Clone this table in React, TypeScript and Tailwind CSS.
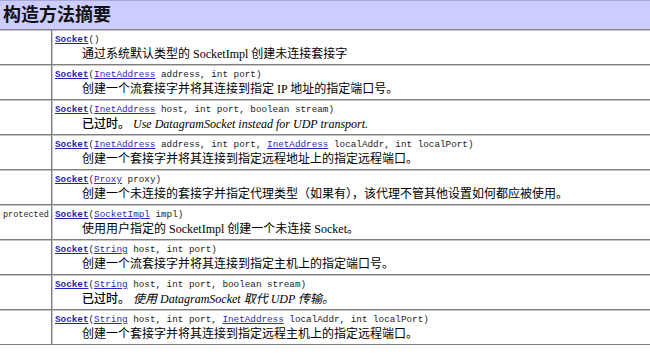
import React from "react";

const mono = { fontFamily: '"Liberation Mono", "DejaVu Sans Mono", monospace' };

function L({ children }: { children: React.ReactNode }) {
  return <span className="text-[#2a2ac0] underline">{children}</span>;
}

function S() {
  return <span className="font-bold text-[#1f1fb0] underline">Socket</span>;
}

type Row = { mod?: string; sig: React.ReactNode; desc: React.ReactNode };

const rows: Row[] = [
  { sig: <><S />()</>, desc: <>通过系统默认类型的 SocketImpl 创建未连接套接字</> },
  {
    sig: <><S />(<L>InetAddress</L> address, int port)</>,
    desc: <>创建一个流套接字并将其连接到指定 IP 地址的指定端口号。</>,
  },
  {
    sig: <><S />(<L>InetAddress</L> host, int port, boolean stream)</>,
    desc: <><span className="font-medium">已过时。</span> <i>Use DatagramSocket instead for UDP transport.</i></>,
  },
  {
    sig: <><S />(<L>InetAddress</L> address, int port, <L>InetAddress</L> localAddr, int localPort)</>,
    desc: <>创建一个套接字并将其连接到指定远程地址上的指定远程端口。</>,
  },
  {
    sig: <><S />(<L>Proxy</L> proxy)</>,
    desc: <>创建一个未连接的套接字并指定代理类型（如果有），该代理不管其他设置如何都应被使用。</>,
  },
  {
    mod: "protected",
    sig: <><S />(<L>SocketImpl</L> impl)</>,
    desc: <>使用用户指定的 SocketImpl 创建一个未连接 Socket。</>,
  },
  {
    sig: <><S />(<L>String</L> host, int port)</>,
    desc: <>创建一个流套接字并将其连接到指定主机上的指定端口号。</>,
  },
  {
    sig: <><S />(<L>String</L> host, int port, boolean stream)</>,
    desc: <><span className="font-medium">已过时。</span> <i>使用 DatagramSocket 取代 UDP 传输。</i></>,
  },
  {
    sig: <><S />(<L>String</L> host, int port, <L>InetAddress</L> localAddr, int localPort)</>,
    desc: <>创建一个套接字并将其连接到指定远程主机上的指定远程端口。</>,
  },
];

export default function App() {
  return (
    <div
      className="w-[650px] h-[355px] bg-white overflow-hidden text-black"
      style={{ fontFamily: '"Liberation Serif", "Noto Sans CJK SC", serif' }}
    >
      <div className="h-[29px] bg-[#ccccff] border-t border-[#a9a9d9] flex items-center pl-[3px]">
        <span className="text-[18px] font-bold leading-none text-[#111]">构造方法摘要</span>
      </div>
      {rows.map((r, i) => (
        <div
          key={i}
          className="flex h-[35px] border-t border-[#7f7f7f] shadow-[inset_0_1px_0_#c6c6c6]"
        >
          <div className="w-[52px] shrink-0 border-r border-[#7f7f7f] shadow-[1px_0_0_#c6c6c6] pt-[5px] pl-[3px]">
            {r.mod && (
              <div className="text-[8.5px] leading-[10px] text-[#222]" style={mono}>
                {r.mod}
              </div>
            )}
          </div>
          <div className="flex-1 pl-[3px] pt-[4px] whitespace-nowrap">
            <div className="text-[9.3px] leading-[12px] text-[#222]" style={mono}>
              {r.sig}
            </div>
            <div className="pl-[27px] text-[12px] leading-[16px]">{r.desc}</div>
          </div>
        </div>
      ))}
      <div className="border-t border-[#7f7f7f] h-[1px] bg-[#c6c6c6]" />
    </div>
  );
}
